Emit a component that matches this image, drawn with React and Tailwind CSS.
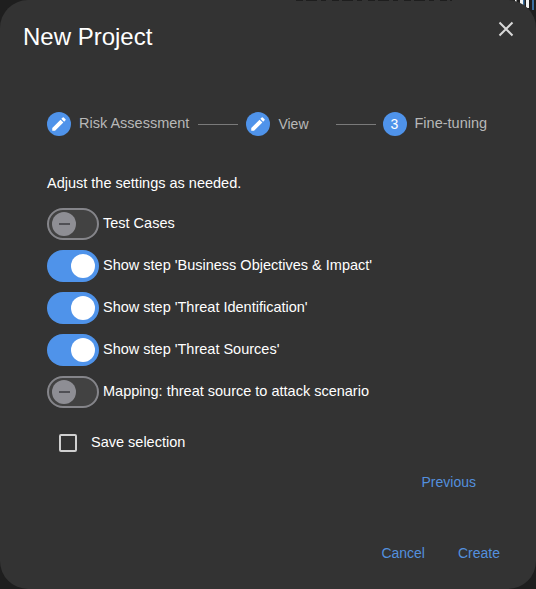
const toggles = [
  { label: 'Test Cases', on: false },
  { label: "Show step 'Business Objectives & Impact'", on: true },
  { label: "Show step 'Threat Identification'", on: true },
  { label: "Show step 'Threat Sources'", on: true },
  { label: 'Mapping: threat source to attack scenario', on: false },
];

const StepDot = ({ children }) => (
  <div className="w-6 h-6 rounded-full bg-[#4f93ea] flex items-center justify-center text-white text-sm shrink-0">
    {children}
  </div>
);

const EditIcon = () => (
  <svg viewBox="0 0 24 24" className="w-[18px] h-[18px]" fill="#fff">
    <path d="M3 17.25V21h3.75L17.81 9.94l-3.75-3.75L3 17.25zM20.71 7.04a1 1 0 0 0 0-1.41l-2.34-2.34a1 1 0 0 0-1.41 0l-1.83 1.83 3.75 3.75 1.83-1.83z" />
  </svg>
);

const Toggle = ({ on }) => {
  if (on) {
    return (
      <div className="w-[52px] h-8 rounded-full bg-[#4f93ea] flex items-center justify-end pr-[4px] shrink-0">
        <div className="w-6 h-6 rounded-full bg-white" />
      </div>
    );
  }
  return (
    <div className="w-[52px] h-8 rounded-full bg-[#424242] border-2 border-[#85858a] flex items-center pl-[3px] shrink-0">
      <div className="w-6 h-6 rounded-full bg-[#8e8e94] flex items-center justify-center">
        <div className="w-[11px] h-[1.5px] bg-[#505055]" />
      </div>
    </div>
  );
};

export default function App() {
  return (
    <div className="relative w-[536px] h-[589px] bg-[#1e1e1e] overflow-hidden font-['Liberation_Sans',Arial,sans-serif]">
      {/* bits of the page behind the dialog, showing at the top right corner */}
      <svg viewBox="0 0 24 12" className="absolute top-0 right-0 w-6 h-3">
        <path d="M3 0h1.5v3H3zM8 0h3v6H8zM14 0h3v8h-3z" fill="#f4f4f4" />
        <path d="M11 0h1.5v7H11zM20 0h2v10h-2z" fill="#3d6f9e" />
      </svg>

      <div className="relative w-full h-full bg-[#333333] rounded-[28px] flex flex-col text-[14.5px]">
        <svg className="absolute top-0 left-[296px] w-[156px] h-[2px]">
          <line x1="0" y1="0.5" x2="156" y2="0.5" stroke="#1e1e1e" strokeWidth="1" strokeDasharray="7 3 11 4 5 6" />
        </svg>

        <button className="absolute top-[18px] right-[19px] text-[#d8d8d8]">
          <svg viewBox="0 0 22 22" className="w-[22px] h-[22px]" stroke="currentColor" strokeWidth="2" fill="none">
            <path d="M4.5 4.5l13 13M17.5 4.5l-13 13" />
          </svg>
        </button>

        <h1 className="text-2xl text-white leading-8 pl-[23px] pt-[21px]">New Project</h1>

        <div className="flex items-center pl-[47px] mt-[59px] text-[#b8b8b8]">
          <StepDot><EditIcon /></StepDot>
          <span className="ml-2">Risk Assessment</span>
          <div className="w-10 h-px bg-[#7a7a7a] ml-[9px]" />
          <div className="ml-2"><StepDot><EditIcon /></StepDot></div>
          <span className="ml-2 text-sm">View</span>
          <div className="w-10 h-px bg-[#7a7a7a] ml-[27px]" />
          <div className="ml-[7px]"><StepDot>3</StepDot></div>
          <span className="ml-2">Fine-tuning</span>
        </div>

        <p className="text-white pl-[47px] mt-[37px] leading-5">Adjust the settings as needed.</p>

        <div className="flex flex-col gap-[10px] pl-[47px] mt-[15px]">
          {toggles.map((t) => (
            <div key={t.label} className="flex items-center gap-1 text-white">
              <Toggle on={t.on} />
              <span>{t.label}</span>
            </div>
          ))}
        </div>

        <label className="flex items-center pl-[59px] mt-[24px] text-white">
          <div className="w-[18px] h-[18px] border-2 border-[#d0d0d0] rounded-[2px]" />
          <span className="ml-[14px]">Save selection</span>
        </label>

        <div className="flex justify-end pr-[60px] mt-[18px] text-sm text-[#5390de]">
          <button>Previous</button>
        </div>

        <div className="flex justify-end gap-[33px] pr-[36px] mt-[51px] text-sm text-[#5390de]">
          <button>Cancel</button>
          <button>Create</button>
        </div>
      </div>
    </div>
  );
}
